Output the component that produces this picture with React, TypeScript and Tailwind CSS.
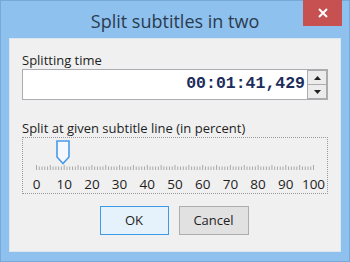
import React from "react";

const labels = [0, 10, 20, 30, 40, 50, 60, 70, 80, 90, 100];

function Ticks() {
  const ticks = [];
  const x0 = 13.5;
  const span = 277;
  for (let i = 0; i <= 100; i++) {
    const x = x0 + (span * i) / 100;
    const tall = i % 5 === 0;
    ticks.push(
      <line key={i} x1={x} x2={x} y1={tall ? 0 : 1.5} y2={5} stroke="#a8a8a8" strokeWidth={1} />
    );
  }
  return (
    <svg width="304" height="6" className="block">
      {ticks}
    </svg>
  );
}

export default function App() {
  const font = { fontFamily: '"Open Sans", "Noto Sans", sans-serif' };
  return (
    <div className="w-[350px] h-[262px] bg-[#8fc1ee] border border-[#76a8da] flex flex-col" style={font}>
      <div className="h-[37px] relative flex justify-center">
        <span className="text-[18px] leading-none text-[#2a3b4f] mt-[11px]">Split subtitles in two</span>
        <div className="absolute right-[7px] top-[-1px] w-[39px] h-[26px] bg-[#c75050] flex items-center justify-center">
          <svg width="10" height="10" viewBox="0 0 10 10">
            <path d="M1 1 L9 9 M9 1 L1 9" stroke="white" strokeWidth="2" />
          </svg>
        </div>
      </div>
      <div className="mx-[8px] h-[214px] bg-[#f0f0f0] border border-[#dce6f0] flex flex-col px-[12px]">
        <div className="text-[13px] leading-none text-[#1e1e1e] mt-[15px]">Splitting time</div>
        <div className="mt-[2px] h-[31px] w-[306px] bg-white border border-[#abadb3] flex items-stretch">
          <div className="flex-1 flex items-center justify-end pr-[2px]">
            <span
              className="text-[16.5px] font-bold text-[#1c2d5c] leading-none"
              style={{ fontFamily: '"Liberation Mono", monospace' }}
            >
              00:01:41,429
            </span>
          </div>
          <div className="w-[20px] flex flex-col">
            <div className="flex-1 border border-[#acacac] bg-[#ececec] flex items-center justify-center">
              <svg width="7" height="4"><path d="M0 4 L3.5 0 L7 4 Z" fill="#222" /></svg>
            </div>
            <div className="flex-1 border border-t-0 border-[#acacac] bg-[#ececec] flex items-center justify-center">
              <svg width="7" height="4"><path d="M0 0 L3.5 4 L7 0 Z" fill="#222" /></svg>
            </div>
          </div>
        </div>
        <div className="text-[13px] leading-none text-[#1e1e1e] mt-[22px]">Split at given subtitle line (in percent)</div>
        <div className="mt-[2px] w-[306px] h-[57px] border border-dotted border-[#9a9a9a] relative flex flex-col">
          <div className="absolute left-[33px] top-[2px]">
            <svg width="14" height="25" viewBox="0 0 14 25">
              <path d="M1 1 H13 V17 L7 23.5 L1 17 Z" fill="#f4f8fc" stroke="#4a9ae8" strokeWidth="1.6" />
            </svg>
          </div>
          <div className="mt-[27px]">
            <Ticks />
          </div>
          <div className="relative h-[18px] mt-[5px] text-[13.5px] text-[#1e1e1e] leading-none">
            {labels.map((l, i) => (
              <span
                key={l}
                className="absolute top-[2px] -translate-x-1/2"
                style={{ left: 13.5 + (277 * i) / 10 }}
              >
                {l}
              </span>
            ))}
          </div>
        </div>
        <div className="flex justify-center gap-[10px] mt-[12px] ml-[-2px]">
          <button className="w-[69px] h-[29px] border border-[#3c9be8] bg-[#e5f1fb] text-[13px] text-[#1e1e1e] rounded-none">OK</button>
          <button className="w-[70px] h-[29px] border border-[#adadad] bg-[#e1e1e1] text-[13px] text-[#1e1e1e] rounded-none">Cancel</button>
        </div>
      </div>
    </div>
  );
}
